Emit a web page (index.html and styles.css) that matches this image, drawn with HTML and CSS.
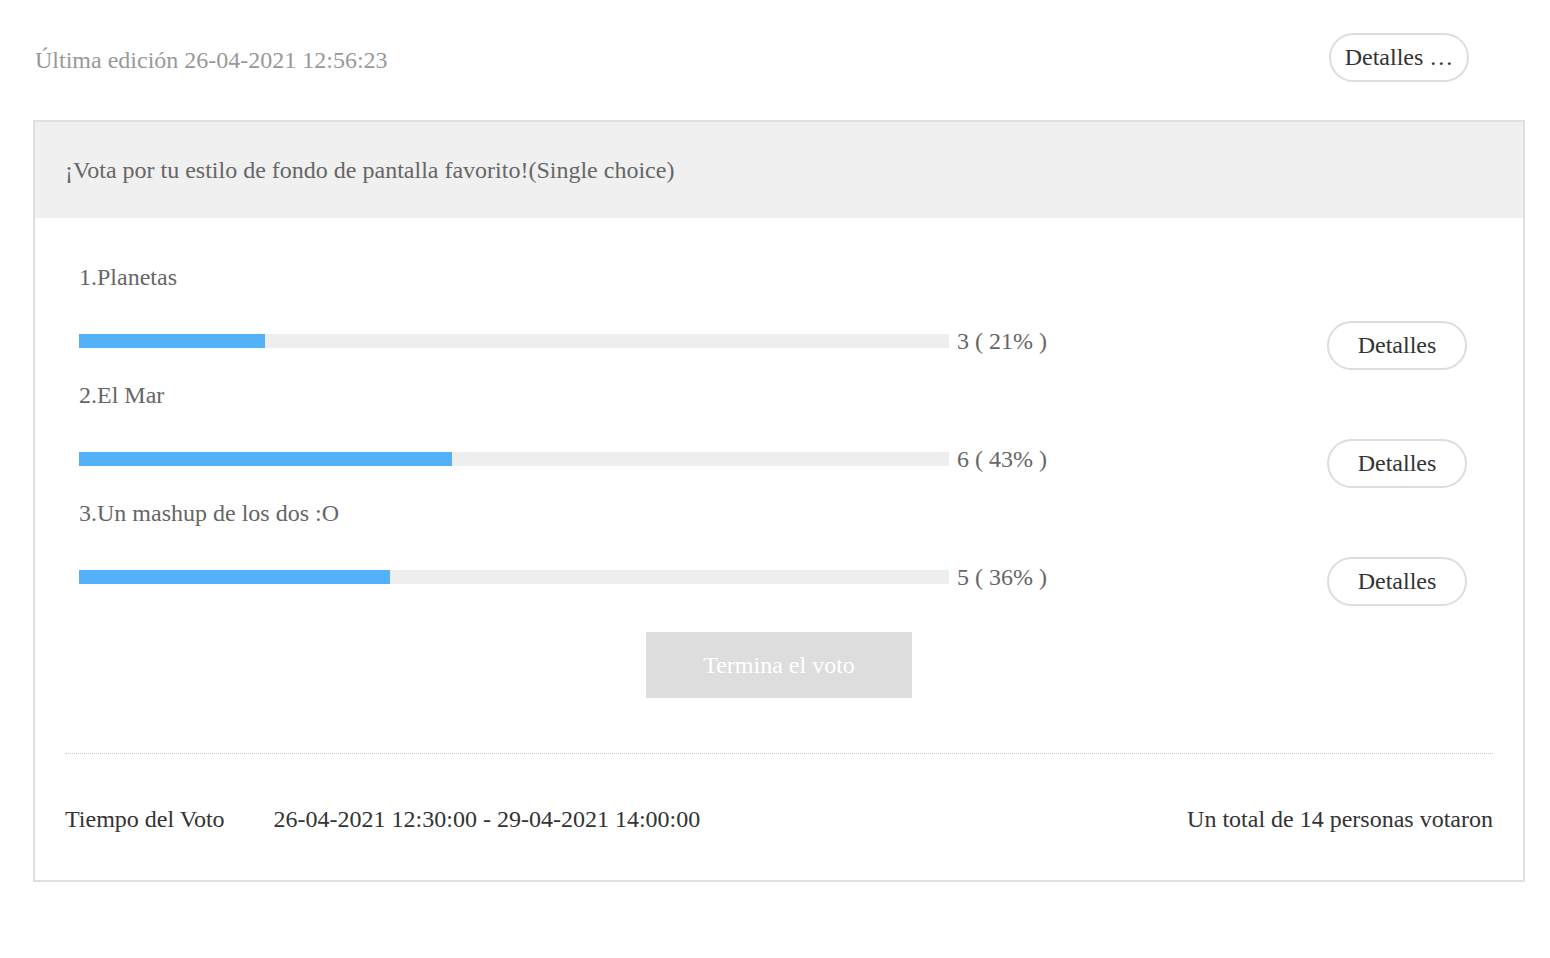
FILE: index.html
```html
<!DOCTYPE html>
<html lang="es">
<head>
<meta charset="utf-8">
<title>Voto</title>
<link rel="stylesheet" href="styles.css">
</head>
<body>
<div class="page">
  <div class="top">
    <span class="edited">Última edición 26-04-2021 12:56:23</span>
    <button class="pill pill-top">Detalles …</button>
  </div>
  <div class="card">
    <div class="card-head">¡Vota por tu estilo de fondo de pantalla favorito!(Single choice)</div>
    <div class="card-body">
      <div class="option">
        <div class="opt-label">1.Planetas</div>
        <div class="opt-row">
          <div class="opt-stat">
            <div class="bar"><div class="fill" style="width:21.43%"></div></div>
            <span class="count">3 ( 21% )</span>
          </div>
          <button class="pill">Detalles</button>
        </div>
      </div>
      <div class="option">
        <div class="opt-label">2.El Mar</div>
        <div class="opt-row">
          <div class="opt-stat">
            <div class="bar"><div class="fill" style="width:42.86%"></div></div>
            <span class="count">6 ( 43% )</span>
          </div>
          <button class="pill">Detalles</button>
        </div>
      </div>
      <div class="option">
        <div class="opt-label">3.Un mashup de los dos :O</div>
        <div class="opt-row">
          <div class="opt-stat">
            <div class="bar"><div class="fill" style="width:35.71%"></div></div>
            <span class="count">5 ( 36% )</span>
          </div>
          <button class="pill">Detalles</button>
        </div>
      </div>
      <div class="end-wrap">
        <button class="end-btn">Termina el voto</button>
      </div>
      <div class="footer">
        <div class="time">
          <span class="time-label">Tiempo del Voto</span>
          <span class="time-range">26-04-2021 12:30:00 - 29-04-2021 14:00:00</span>
        </div>
        <span class="total">Un total de 14 personas votaron</span>
      </div>
    </div>
  </div>
</div>
</body>
</html>
```

FILE: styles.css
```css
html, body {
  margin: 0;
  padding: 0;
  background: #fff;
}
body {
  font-family: "Liberation Serif", "Times New Roman", serif;
  font-size: 24px;
  line-height: 30px;
  color: #333;
}
.page {
  padding: 32px 26px 0 33px;
}
.top {
  display: flex;
  justify-content: space-between;
  align-items: center;
  padding: 0 55px 0 2px;
  height: 50px;
}
.edited {
  color: #999;
  margin-top: 6px;
}
.pill {
  font-family: inherit;
  font-size: 24px;
  line-height: 30px;
  color: #333;
  background: #fff;
  border: 2px solid #ddd;
  border-radius: 25px;
  height: 49px;
  width: 140px;
  padding: 0;
  cursor: pointer;
}
.card {
  margin-top: 38px;
  border: 2px solid #e0e0e0;
  width: 1488px;
}
.card-head {
  background: #f0f0f0;
  height: 96px;
  display: flex;
  align-items: center;
  padding-left: 30px;
  color: #666;
}
.card-body {
  padding: 44px 30px 46px 30px;
}
.option {
  padding: 0 26px 0 14px;
  margin-bottom: 10px;
}
.opt-label {
  color: #666;
  margin-bottom: 28px;
}
.opt-row {
  display: flex;
  justify-content: space-between;
  align-items: center;
  height: 50px;
}
.opt-stat {
  display: flex;
  align-items: center;
  padding-bottom: 8px;
}
.bar {
  width: 870px;
  height: 14px;
  background: #eee;
}
.fill {
  height: 100%;
  background: #52b1f9;
}
.count {
  color: #666;
  margin-left: 8px;
}
.end-wrap {
  display: flex;
  justify-content: center;
  padding-top: 16px;
  padding-bottom: 55px;
  border-bottom: 1px dotted #c8c8c8;
}
.end-btn {
  font-family: inherit;
  font-size: 24px;
  color: #fff;
  background: #ddd;
  border: none;
  width: 266px;
  height: 66px;
  padding: 0;
}
.footer {
  display: flex;
  justify-content: space-between;
  padding-top: 50px;
  color: #333;
}
.time-range {
  margin-left: 43px;
}
```
